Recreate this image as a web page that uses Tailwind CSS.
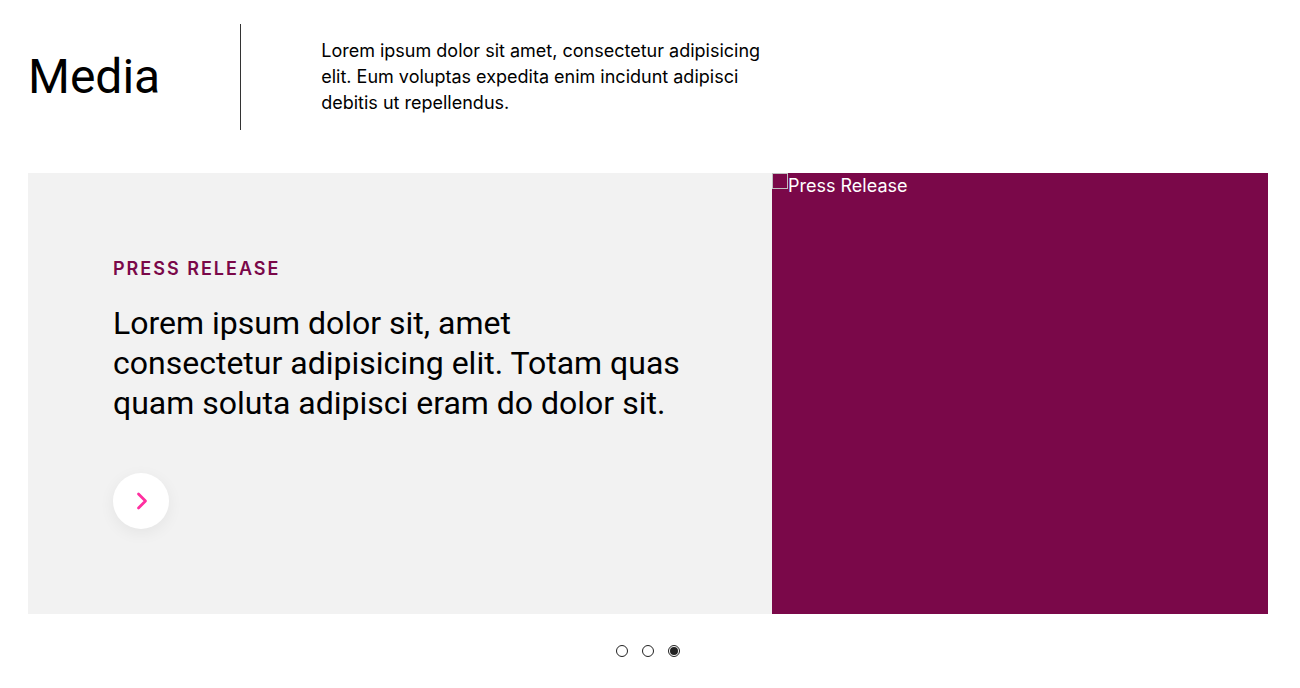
<!DOCTYPE html>
<html lang="en">
<head>
<meta charset="utf-8">
<meta name="viewport" content="width=device-width, initial-scale=1">
<title>Media</title>
<script src="https://cdn.jsdelivr.net/npm/@tailwindcss/browser@4"></script>
</head>
<body class="bg-white text-black antialiased font-['Inter',sans-serif]">
<main class="pt-6 pr-8 pl-7">
  <header class="flex items-stretch">
    <h1 class="flex items-center pr-20 text-5xl font-['Roboto',sans-serif]">Media</h1>
    <div class="border-l border-[#333] py-3.5 pl-20">
      <p class="max-w-[450px] text-lg leading-[26px]">Lorem ipsum dolor sit amet, consectetur adipisicing elit. Eum voluptas expedita enim incidunt adipisci debitis ut repellendus.</p>
    </div>
  </header>
  <section class="mt-[43px] grid grid-cols-[3fr_2fr]">
    <article class="bg-[#f2f2f2] p-[85px]">
      <p class="text-lg leading-[22px] font-semibold tracking-[2px] text-[#7a0849] uppercase">Press Release</p>
      <h2 class="mt-[23px] text-[32px] leading-10 font-['Roboto',sans-serif]">Lorem ipsum dolor sit, amet consectetur adipisicing elit. Totam quas quam soluta adipisci eram do dolor sit.</h2>
      <button type="button" aria-label="Read more" class="mt-[50px] flex size-14 items-center justify-center rounded-full bg-white shadow-[0_4px_16px_rgba(0,0,0,0.06)]">
        <svg class="size-6" viewBox="0 0 24 24" fill="none" stroke="#ff2fa0" stroke-width="2.8" stroke-linecap="round" stroke-linejoin="round"><path d="M9.5 5l7 7-7 7"/></svg>
      </button>
    </article>
    <div class="flex items-start bg-[#7a0849] text-lg leading-[26px] text-white">
      <span class="size-4 border border-[#c0c0c0]"></span>
      <span>Press Release</span>
    </div>
  </section>
  <nav aria-label="Slides" class="mt-[31px] flex justify-center gap-3.5">
    <button type="button" aria-label="Slide 1" class="size-3 rounded-full border border-[#222]"></button>
    <button type="button" aria-label="Slide 2" class="size-3 rounded-full border border-[#222]"></button>
    <button type="button" aria-label="Slide 3" aria-current="true" class="flex size-3 items-center justify-center rounded-full border border-[#222]"><span class="size-2 rounded-full bg-[#222]"></span></button>
  </nav>
</main>
</body>
</html>
